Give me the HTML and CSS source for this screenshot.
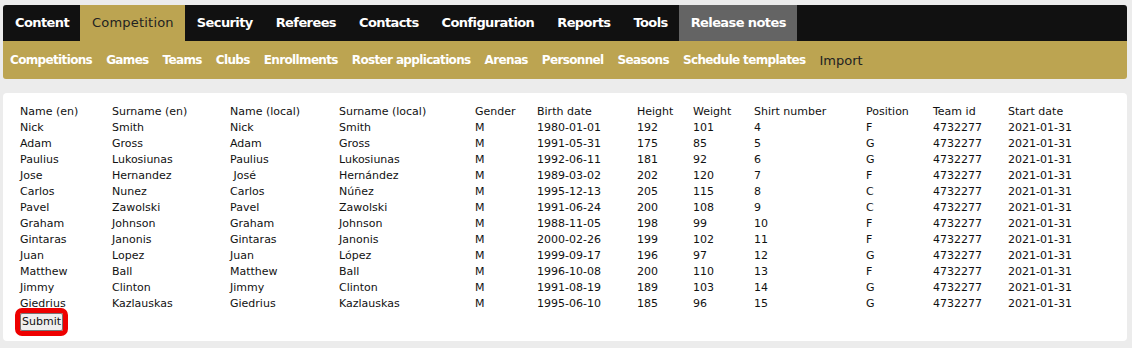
FILE: index.html
```html
<!DOCTYPE html>
<html>
<head>
<meta charset="utf-8">
<link rel="stylesheet" href="styles.css">
</head>
<body>
<div class="page">
  <nav class="mainnav">
    <a class="tab">Content</a>
    <a class="tab active">Competition</a>
    <a class="tab">Security</a>
    <a class="tab">Referees</a>
    <a class="tab">Contacts</a>
    <a class="tab">Configuration</a>
    <a class="tab">Reports</a>
    <a class="tab">Tools</a>
    <a class="tab release">Release notes</a>
  </nav>
  <nav class="subnav">
    <a class="sub">Competitions</a>
    <a class="sub">Games</a>
    <a class="sub">Teams</a>
    <a class="sub">Clubs</a>
    <a class="sub">Enrollments</a>
    <a class="sub">Roster applications</a>
    <a class="sub">Arenas</a>
    <a class="sub">Personnel</a>
    <a class="sub">Seasons</a>
    <a class="sub">Schedule templates</a>
    <a class="sub current">Import</a>
  </nav>
  <main class="content">
    <table class="roster">
      <colgroup>
        <col class="c1"><col class="c2"><col class="c3"><col class="c4"><col class="c5"><col class="c6">
        <col class="c7"><col class="c8"><col class="c9"><col class="c10"><col class="c11"><col class="c12">
      </colgroup>
      <thead>
        <tr><th>Name (en)</th><th>Surname (en)</th><th>Name (local)</th><th>Surname (local)</th><th>Gender</th><th>Birth date</th><th>Height</th><th>Weight</th><th>Shirt number</th><th>Position</th><th>Team id</th><th>Start date</th></tr>
      </thead>
      <tbody>
        <tr><td>Nick</td><td>Smith</td><td>Nick</td><td>Smith</td><td>M</td><td>1980-01-01</td><td>192</td><td>101</td><td>4</td><td>F</td><td>4732277</td><td>2021-01-31</td></tr>
        <tr><td>Adam</td><td>Gross</td><td>Adam</td><td>Gross</td><td>M</td><td>1991-05-31</td><td>175</td><td>85</td><td>5</td><td>G</td><td>4732277</td><td>2021-01-31</td></tr>
        <tr><td>Paulius</td><td>Lukosiunas</td><td>Paulius</td><td>Lukosiunas</td><td>M</td><td>1992-06-11</td><td>181</td><td>92</td><td>6</td><td>G</td><td>4732277</td><td>2021-01-31</td></tr>
        <tr><td>Jose</td><td>Hernandez</td><td>&nbsp;José</td><td>Hernández</td><td>M</td><td>1989-03-02</td><td>202</td><td>120</td><td>7</td><td>F</td><td>4732277</td><td>2021-01-31</td></tr>
        <tr><td>Carlos</td><td>Nunez</td><td>Carlos</td><td>Núñez</td><td>M</td><td>1995-12-13</td><td>205</td><td>115</td><td>8</td><td>C</td><td>4732277</td><td>2021-01-31</td></tr>
        <tr><td>Pavel</td><td>Zawolski</td><td>Pavel</td><td>Zawolski</td><td>M</td><td>1991-06-24</td><td>200</td><td>108</td><td>9</td><td>C</td><td>4732277</td><td>2021-01-31</td></tr>
        <tr><td>Graham</td><td>Johnson</td><td>Graham</td><td>Johnson</td><td>M</td><td>1988-11-05</td><td>198</td><td>99</td><td>10</td><td>F</td><td>4732277</td><td>2021-01-31</td></tr>
        <tr><td>Gintaras</td><td>Janonis</td><td>Gintaras</td><td>Janonis</td><td>M</td><td>2000-02-26</td><td>199</td><td>102</td><td>11</td><td>F</td><td>4732277</td><td>2021-01-31</td></tr>
        <tr><td>Juan</td><td>Lopez</td><td>Juan</td><td>López</td><td>M</td><td>1999-09-17</td><td>196</td><td>97</td><td>12</td><td>G</td><td>4732277</td><td>2021-01-31</td></tr>
        <tr><td>Matthew</td><td>Ball</td><td>Matthew</td><td>Ball</td><td>M</td><td>1996-10-08</td><td>200</td><td>110</td><td>13</td><td>F</td><td>4732277</td><td>2021-01-31</td></tr>
        <tr><td>Jimmy</td><td>Clinton</td><td>Jimmy</td><td>Clinton</td><td>M</td><td>1991-08-19</td><td>189</td><td>103</td><td>14</td><td>G</td><td>4732277</td><td>2021-01-31</td></tr>
        <tr><td>Giedrius</td><td>Kazlauskas</td><td>Giedrius</td><td>Kazlauskas</td><td>M</td><td>1995-06-10</td><td>185</td><td>96</td><td>15</td><td>G</td><td>4732277</td><td>2021-01-31</td></tr>
      </tbody>
    </table>
    <div class="actions">
      <button class="submit" type="button">Submit</button>
    </div>
  </main>
</div>
</body>
</html>
```

FILE: styles.css
```css
html, body {
  margin: 0;
  padding: 0;
}
body {
  background: #ececec;
  font-family: "DejaVu Sans", Verdana, sans-serif;
  color: #111;
}
.page {
  padding: 5px 5px 0 3px;
}
.mainnav {
  display: flex;
  height: 36px;
  background: #111111;
  border-radius: 3px 3px 0 0;
}
.tab {
  display: block;
  padding: 0 11px 0 12px;
  line-height: 36px;
  font-size: 13px;
  font-weight: bold;
  letter-spacing: -0.6px;
  color: #fff;
  white-space: nowrap;
}
.tab.active {
  background: #bca451;
  color: #222;
  font-weight: normal;
  letter-spacing: 0.2px;
}
.tab.release {
  background: #646464;
}
.subnav {
  display: flex;
  gap: 14px;
  height: 38px;
  align-items: center;
  padding: 0 7px;
  background: #bca451;
  border-radius: 0 0 3px 3px;
}
.sub {
  font-size: 12px;
  font-weight: bold;
  letter-spacing: -0.65px;
  color: #fff;
  white-space: nowrap;
}
.sub.current {
  color: #222;
  font-weight: normal;
  font-size: 13px;
  letter-spacing: 0;
}
.content {
  margin-top: 14px;
  background: #fff;
  border-radius: 4px;
  padding: 11px 17px 10px 17px;
  height: 227px;
}
.roster {
  border-collapse: collapse;
  table-layout: fixed;
  width: 1088px;
  font-size: 11px;
}
.roster th, .roster td {
  padding: 0;
  text-align: left;
  font-weight: normal;
  line-height: 16px;
  white-space: nowrap;
}
.c1 { width: 92px; }
.c2 { width: 118px; }
.c3 { width: 109px; }
.c4 { width: 136px; }
.c5 { width: 62px; }
.c6 { width: 100px; }
.c7 { width: 56px; }
.c8 { width: 61px; }
.c9 { width: 112px; }
.c10 { width: 67px; }
.c11 { width: 75px; }
.c12 { width: 100px; }
.actions {
  display: flex;
  margin-top: 1px;
}
.submit {
  font-family: "DejaVu Sans", Verdana, sans-serif;
  font-size: 11px;
  color: #111;
  height: 18px;
  padding: 0 1px;
  background: #efefef;
  border: 1px solid #767676;
  border-radius: 2px;
  outline: 5px solid #ee0000;
  outline-offset: 0;
  line-height: 14px;
}
```
